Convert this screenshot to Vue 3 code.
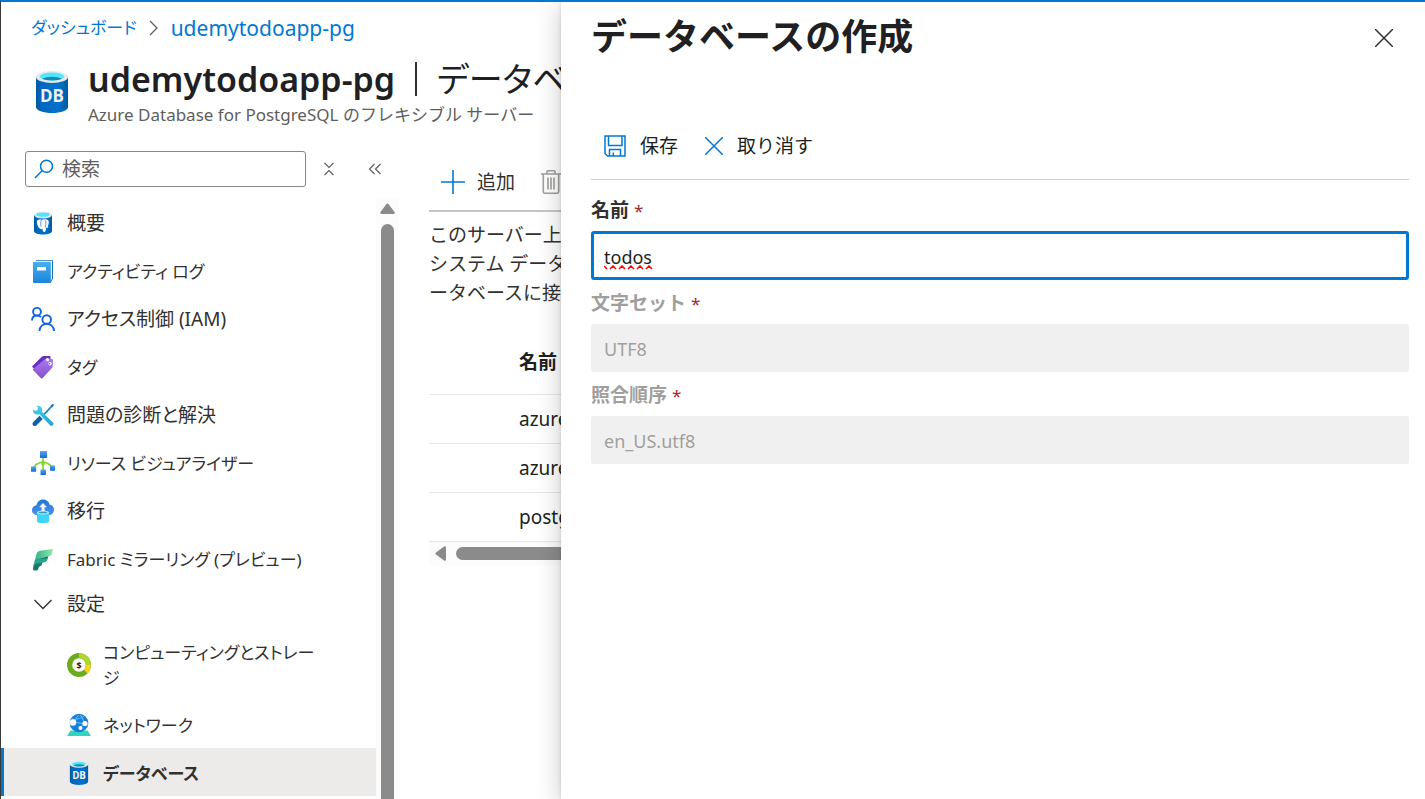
<script setup>
import { ref } from 'vue'

const search = ref('')
const dbName = ref('todos')
const charset = ref('UTF8')
const collation = ref('en_US.utf8')

const items = [
  { icon: 'postgres', label: '概要' },
  { icon: 'log', label: 'アクティビティ ログ', kana: true },
  { icon: 'iam', label: 'アクセス制御 (IAM)' },
  { icon: 'tag', label: 'タグ', kana: true },
  { icon: 'tools', label: '問題の診断と解決' },
  { icon: 'tree', label: 'リソース ビジュアライザー', kana: true },
  { icon: 'migrate', label: '移行' },
  { icon: 'fabric', label: 'Fabric ミラーリング (プレビュー)', kana: true },
]
const subItems = [
  { icon: 'compute', label: 'コンピューティングとストレージ', tall: true },
  { icon: 'network', label: 'ネットワーク' },
  { icon: 'db', label: 'データベース', active: true },
]
const rows = ['azure_maintenance', 'azure_sys', 'postgres']
</script>

<template>
  <div class="shell">
    <svg class="defs" width="0" height="0" aria-hidden="true">
      <defs>
        <linearGradient id="gBody" x1="0" x2="1" y1="0" y2="0">
          <stop offset="0" stop-color="#005ba1" /><stop offset=".2" stop-color="#0068be" />
          <stop offset=".7" stop-color="#0072cc" /><stop offset="1" stop-color="#005ba1" />
        </linearGradient>
        <linearGradient id="gBook" x1="0" x2="0" y1="0" y2="1">
          <stop offset="0" stop-color="#4cadf0" /><stop offset="1" stop-color="#1b84d8" />
        </linearGradient>
        <linearGradient id="gTag" x1="0" x2="0" y1="0" y2="1">
          <stop offset="0" stop-color="#a67af4" /><stop offset="1" stop-color="#8a4fc8" />
        </linearGradient>
        <linearGradient id="gTool" x1="0" x2="0" y1="0" y2="1">
          <stop offset="0" stop-color="#50d0f0" /><stop offset="1" stop-color="#18a0d8" />
        </linearGradient>
        <linearGradient id="gNode" x1="0" x2="0" y1="0" y2="1">
          <stop offset="0" stop-color="#5ea0ef" /><stop offset="1" stop-color="#0f6cd6" />
        </linearGradient>
        <linearGradient id="gCloud" x1="0" x2="0" y1="0" y2="1">
          <stop offset="0" stop-color="#1f74d8" /><stop offset="1" stop-color="#4a94ec" />
        </linearGradient>
        <linearGradient id="gFab" x1="0" x2="1" y1="0" y2="0">
          <stop offset="0" stop-color="#33b08e" /><stop offset="1" stop-color="#8deaa4" />
        </linearGradient>
        <symbol id="i-db" viewBox="0 0 32 42">
          <path fill="url(#gBody)" d="M0 6v30c0 3.400 7.200 6 16 6s16-2.600 16-6V6z" />
          <ellipse cx="16" cy="6" rx="16" ry="6" fill="#e8e8e8" />
          <ellipse cx="16" cy="5.500" rx="12" ry="4" fill="#50e6ff" />
          <path fill="#198ab3" d="M6 7.800c2.400-1.300 6-2 10-2s7.600.7 10 2c-2.400 1.100-6 1.700-10 1.700s-7.600-.6-10-1.700z" />
          <text x="16" y="31" text-anchor="middle" font-family="Open Sans, Noto Sans, sans-serif" font-weight="700" font-size="17" fill="#f2f2f2">DB</text>
        </symbol>
        <symbol id="i-postgres" viewBox="0 0 24 24">
          <path fill="url(#gBody)" d="M3 4v16c0 2 4 3.500 9 3.500s9-1.500 9-3.500V4z" />
          <ellipse cx="12" cy="4" rx="9" ry="3.500" fill="#e8e8e8" />
          <ellipse cx="12" cy="3.600" rx="7" ry="2.200" fill="#50e6ff" />
          <path fill="#fff" d="M6 10c1-1.600 3-1.800 4.500-1.200C12.500 8 16 8 17.400 9.500c1 1.300.3 4-.8 6l1 .6c-.6.8-1.800 1-2.600.7 0 1.900-.3 3.900-1.500 4.100-1.800.3-2-1.400-2-3.100-.7.600-1.700.5-2.300-.1C7.500 17.200 5.300 12.500 6 10z" />
          <path fill="none" stroke="#1c6cba" stroke-width=".7" d="M10.500 9c-1.300 2-.6 4.200-.6 6.500M14 9.200c1.500 1.600.8 4 .4 6.300l.7 1.200" />
        </symbol>
        <symbol id="i-log" viewBox="0 0 24 24">
          <path fill="#1570b8" d="M5 1h16q1 0 1 1v17.500L19.500 24H4z" />
          <path fill="#e8eef4" d="M4 3q0-1.200 1.500-1.200H21v18l-1.500 2.500z" />
          <path fill="url(#gBook)" d="M2 3h17q.8 0 .8.800V23q0 1-.8 1H3q-1 0-1-1z" />
          <rect x="6" y="8" width="9" height="3.500" rx=".4" fill="#fff" />
        </symbol>
        <symbol id="i-iam" viewBox="0 0 24 24">
          <g fill="none" stroke="#1464e0" stroke-width="1.900">
            <circle cx="6" cy="4.800" r="3.900" /><path d="M1 13.500c0-5.500 6-6.500 9-3.300" />
            <circle cx="15.700" cy="12.500" r="4.300" /><path d="M8.500 24c0-9.500 14.500-9.500 14.500 0" />
          </g>
        </symbol>
        <symbol id="i-tag" viewBox="0 0 24 24">
          <path fill="#6a2fc4" d="M1 11.500L10.500 2q1-1 2.500-1h5.500q1 0 1 1v3L6 17z" />
          <path fill="url(#gTag)" d="M2 14L13.500 4.500q1-.8 2.500-.8l5 .3q1 0 1 1l-.3 6q0 1.300-1 2.300l-9 9.700q-1 1-2 0L2 15q-.5-.5 0-1z" />
          <circle cx="16.500" cy="4.700" r="1.600" fill="#fff" /><circle cx="19" cy="8.700" r="1.700" fill="#fff" />
          <circle cx="18.500" cy="8.700" r=".8" fill="#7a45cc" />
        </symbol>
        <symbol id="i-tools" viewBox="0 0 24 24">
          <path stroke="#1978b8" stroke-width="1.800" d="M12 12.500L21 3" />
          <path fill="#1978b8" d="M19.500 2.500L22 .8l1 1-1.700 2.700z" />
          <path fill="#0f62aa" d="M2 19.200l6.500-6.500 3.300 3.300-6.500 6.500c-2.300 1.800-4.800-1-3.300-3.300z" />
          <path fill="url(#gTool)" d="M2.200 6.500l1.700 1.300 2.500-.6.600-2.500L5.500 3C9 1.800 12.300 5 11 8.700l11.300 11.200c.9 1.600-1.300 3.700-2.900 2.700L8.500 11.300C5 12.500 1 9.800 2.200 6.500z" />
        </symbol>
        <symbol id="i-tree" viewBox="0 0 24 24">
          <path fill="none" stroke="#86d633" stroke-width="1.700" d="M12 6v13M12 10.500C7.500 12.500 3 13 3 18M12 10.500c4.500 2 8.500 2.500 9 7" />
          <circle cx="12" cy="12.500" r="2" fill="#86d633" />
          <g fill="url(#gNode)">
            <rect x="9" y="0" width="7" height="7" rx=".6" /><rect x="0" y="15.500" width="5.200" height="5.200" rx=".4" />
            <rect x="9.500" y="18.500" width="5.500" height="5.500" rx=".4" /><rect x="19" y="14.500" width="5" height="5.200" rx=".4" />
          </g>
        </symbol>
        <symbol id="i-migrate" viewBox="0 0 24 24">
          <path fill="url(#gCloud)" d="M6.500 16C2.500 16 1 13.500 1 11c0-2.500 2-4.500 4.500-4.800C6 3 8.500.5 12 .5c3.300 0 6 2 6.800 5.200C21.500 6 23 8.200 23 10.700c0 3-2 5.300-5 5.300z" />
          <path fill="#f4f4f4" d="M12 4l4 4.200h-2.400v4.300h-3V8.200H8z" />
          <path fill="#3fd3f5" d="M6 13.500v9C6 23.500 9 24 12 24s6-.5 6-1.500v-9z" />
          <ellipse cx="12" cy="13.500" rx="6" ry="1.900" fill="#d8f6fd" /><ellipse cx="12" cy="13.500" rx="4.500" ry="1" fill="#3b9cc4" />
        </symbol>
        <symbol id="i-fabric" viewBox="0 0 24 24">
          <path fill="#16786c" d="M2 21.500l1-5.500 9-3-1.500 5.500-2.500 1.200-1 2.800q-.4 1-1.400 1H3.200Q1.800 23.300 2 21.500z" />
          <path fill="#0d6560" d="M3.500 14.500l2-3.200 12-3-1.500 5.200-8 2.500z" />
          <path fill="#2ba58d" d="M4 12.500l12.500-1.500-.7 2.300q-.4 1.500-2 1.900L4.500 17l-2.200 3z" />
          <path fill="url(#gFab)" d="M5.500 7.200Q6 4.200 9 3.700L22 2l-1.300 5q-.5 1.700-2 2.100L4 13z" />
        </symbol>
        <symbol id="i-compute" viewBox="0 0 24 24">
          <g fill="none" stroke-width="5.200">
            <circle cx="12" cy="12" r="9.400" stroke="#6aac1c" />
            <path stroke="#b0d430" d="M12 2.600a9.400 9.400 0 0 1 9.400 9.400" />
            <path stroke="#fcd116" d="M21.400 12a9.400 9.400 0 0 1-2.700 6.600" />
          </g>
          <text x="12" y="15.500" text-anchor="middle" font-family="Open Sans, Noto Sans, sans-serif" font-weight="700" font-size="9" fill="#222">$</text>
        </symbol>
        <symbol id="i-network" viewBox="0 0 24 24">
          <path fill="#32d4c0" d="M3.500 17.500h17l3 4.500q.8 1-.5 1H1q-1.300 0-.5-1z" />
          <circle cx="12" cy="10" r="9.300" fill="#1780dc" />
          <path fill="none" stroke="#6cbcf4" stroke-width="1" d="M7 9L11.500 2M7 9l11 2M13 14.500l5-4M5 6c4 1 9-.5 12-3M13.500 2l4.500 8.500" />
          <circle cx="6" cy="9.500" r="3.200" fill="#fff" /><circle cx="18" cy="10.500" r="2.600" fill="#fff" /><circle cx="13.500" cy="15" r="2" fill="#fff" />
        </symbol>
      </defs>
    </svg>

    <header class="top">
      <nav class="crumbs prop">
        <a class="home" href="#">ダッシュボード</a>
        <svg width="10" height="16" viewBox="0 0 10 16"><path fill="none" stroke="#605e5c" stroke-width="1.300" d="M1 1l7 7-7 7" /></svg>
        <a href="#">udemytodoapp-pg</a>
      </nav>
      <div class="titlebar">
        <svg class="resicon" width="32" height="42"><use href="#i-db" /></svg>
        <div>
          <h1 class="prop"><b>udemytodoapp-pg</b><i class="bar"></i>データベース</h1>
          <p class="subtitle">Azure Database for PostgreSQL のフレキシブル サーバー</p>
        </div>
      </div>
    </header>

    <div class="body">
      <aside class="side prop">
        <div class="searchrow">
          <label class="search">
            <svg width="20" height="20" viewBox="0 0 20 20"><g fill="none" stroke="#0078d4" stroke-width="1.500"><circle cx="12.500" cy="7.200" r="6" /><path d="M8.200 11.600L1 19" /></g></svg>
            <input v-model="search" type="text" placeholder="検索" aria-label="検索" />
          </label>
          <button class="mini" aria-label="すべて折りたたむ">
            <svg width="12" height="14" viewBox="0 0 12 14"><path fill="none" stroke="#605e5c" stroke-width="1.200" d="M1.500 1L6 5.500 10.500 1M1.500 13L6 8.500l4.500 4.500" /></svg>
          </button>
          <button class="mini" aria-label="メニューを閉じる">
            <svg width="14" height="12" viewBox="0 0 14 12"><path fill="none" stroke="#605e5c" stroke-width="1.200" d="M6.500 1l-5 5 5 5M12.500 1l-5 5 5 5" /></svg>
          </button>
        </div>
        <div class="navwrap">
          <nav class="nav">
            <a v-for="i in items" :key="i.label" class="item" :class="{ kana: i.kana }" href="#">
              <svg width="24" height="24"><use :href="'#i-' + i.icon" /></svg><span>{{ i.label }}</span>
            </a>
            <button class="item group" aria-expanded="true">
              <svg width="24" height="24" viewBox="0 0 24 24"><path fill="none" stroke="#323130" stroke-width="1.400" d="M3.500 8l8.500 8.500L20.500 8" /></svg><span>設定</span>
            </button>
            <a v-for="i in subItems" :key="i.label" class="item sub kana" :class="{ tall: i.tall, active: i.active }" href="#">
              <svg width="24" height="24"><use :href="'#i-' + i.icon" /></svg><span>{{ i.label }}</span>
            </a>
          </nav>
          <div class="vscroll">
            <svg width="15" height="11" viewBox="0 0 15 11"><path fill="#8b8b8b" d="M6.500 1q1-1.200 2 0l6 8q.8 2-1 2h-12q-1.800 0-1-2z" /></svg>
            <div class="vthumb"></div>
          </div>
        </div>
      </aside>

      <main class="main">
        <div class="commands">
          <button class="cmd">
            <svg width="24" height="24" viewBox="0 0 24 24"><path stroke="#0078d4" stroke-width="1.600" d="M12 0v24M0 12h24" /></svg>追加
          </button>
          <button class="cmd" disabled aria-label="削除">
            <svg width="20" height="24" viewBox="0 0 20 24"><path fill="none" stroke="#a19f9d" stroke-width="1.600" d="M0 4h20M6 4V1.500q0-.7.700-.7h6.600q.7 0 .7.700V4M2.300 4v17.500q0 1.700 1.500 1.700h12.400q1.500 0 1.500-1.700V4M7 7.500v12M10 7.500v12M13 7.500v12" /></svg>
          </button>
        </div>
        <p class="desc">このサーバー上<br />システム データ<br />ータベースに接</p>
        <table>
          <thead><tr><th>名前</th></tr></thead>
          <tbody><tr v-for="r in rows" :key="r"><td>{{ r }}</td></tr></tbody>
        </table>
        <div class="hscroll">
          <svg width="11" height="15" viewBox="0 0 11 15"><path fill="#8b8b8b" d="M1 6.500q-1.200 1 0 2l8 6q2 .8 2-1v-12q0-1.800-2-1z" /></svg>
          <div class="hthumb"></div>
        </div>
      </main>
    </div>

    <section class="panel" role="dialog" aria-labelledby="paneltitle">
      <div class="panelhead">
        <h2 id="paneltitle">データベースの作成</h2>
        <button class="close" aria-label="閉じる">
          <svg width="18" height="18" viewBox="0 0 18 18"><path stroke="#323130" stroke-width="1.500" d="M0 0l18 18M18 0L0 18" /></svg>
        </button>
      </div>
      <div class="panelcmds">
        <button class="cmd">
          <svg width="22" height="22" viewBox="0 0 22 22"><g fill="none" stroke="#0078d4" stroke-width="1.500"><path d="M1 1h20v20H3.500L1 18.500z" /><path d="M4.500 1v9.500h13.500V1M5.500 21v-6.500h11V21M9.300 21v-3.500" /></g></svg>保存
        </button>
        <button class="cmd">
          <svg width="18" height="18" viewBox="0 0 18 18"><path stroke="#0078d4" stroke-width="1.500" d="M0 0l18 18M18 0L0 18" /></svg>取り消す
        </button>
      </div>
      <form class="form" @submit.prevent>
        <label for="f-name">名前 <span class="req">*</span></label>
        <div class="field">
          <input id="f-name" v-model="dbName" class="focus" type="text" spellcheck="false" />
          <svg class="squiggle" width="50" height="5" viewBox="0 0 50 5"><path fill="none" stroke="#f00" stroke-width="1.500" d="M0 1l3 3M6 4l3-3 3 3M15 4l3-3 3 3M24 4l3-3 3 3M33 4l3-3 3 3M42 4l3-3 3 3" /></svg>
        </div>
        <label for="f-charset" class="off">文字セット <span class="req">*</span></label>
        <input id="f-charset" v-model="charset" type="text" disabled />
        <label for="f-coll" class="off">照合順序 <span class="req">*</span></label>
        <input id="f-coll" v-model="collation" type="text" disabled />
      </form>
    </section>
  </div>
</template>

<style>
body { margin: 0; background: #fff; }
</style>

<style scoped>
* { box-sizing: border-box; }
.shell {
  position: relative; height: 100vh; overflow: hidden; display: flex; flex-direction: column;
  border-top: 2px solid #0078d4; border-left: 1px solid #3b3a39; background: #fff; color: #323130;
  font-family: "Noto Sans", "Noto Sans CJK JP", sans-serif; font-size: 19px; line-height: 28px;
}
.defs { position: absolute; }
.prop { font-feature-settings: "palt"; }
button { border: 0; background: none; padding: 0; margin: 0; color: inherit; font: inherit; font-feature-settings: inherit; }
a { color: inherit; text-decoration: none; }
svg { flex: none; display: block; }

.top { padding: 12px 0 0 30px; white-space: nowrap; }
.crumbs { display: flex; align-items: center; gap: 12px; height: 28px; font-size: 21px; }
.crumbs a { color: #0078d4; }
.crumbs .home { font-size: 17px; }
.titlebar { display: flex; gap: 20px; padding: 15px 0 0 5px; }
.resicon { margin-top: 14px; }
h1 { display: flex; align-items: center; margin: 0; font-size: 34px; line-height: 44px; font-weight: 400; color: #201f24; }
h1 b { font-weight: 600; }
.bar { width: 2px; height: 34px; margin: 0 20px; background: #323130; }
.subtitle { margin: 0; font-size: 17px; line-height: 28px; color: #605e5c; }

.body { flex: 1; min-height: 0; display: flex; }
.side { width: 398px; flex: none; display: flex; flex-direction: column; padding-top: 22px; }
.searchrow { display: flex; align-items: center; padding-left: 24px; height: 36px; }
.search { display: flex; align-items: center; gap: 8px; width: 281px; height: 36px; padding: 0 8px; border: 1px solid #8a8886; border-radius: 3px; }
.search input { flex: 1; min-width: 0; border: 0; outline: 0; padding: 0; background: none; font: inherit; color: inherit; }
.search input::placeholder { color: #605e5c; opacity: 1; }
.mini { display: flex; justify-content: center; width: 46px; }
.navwrap { flex: 1; min-height: 0; display: flex; padding-top: 11px; }
.nav { flex: 1; min-width: 0; overflow: hidden; }
.item { display: flex; align-items: center; gap: 12px; width: 100%; height: 48px; padding: 2px 0 0 30px; line-height: 25px; text-align: left; }
.kana { font-size: 17px; }
.group { height: 46px; padding: 0 0 2px 30px; }
.sub { padding-left: 66px; padding-right: 55px; }
.tall { height: 72px; }
.active { background: #edebe9; border-left: 3px solid #0078d4; padding-left: 63px; font-weight: 600; }
.vscroll { width: 23px; display: flex; flex-direction: column; align-items: center; gap: 10px; padding-top: 5px; background: #fcfcfc; }
.vthumb { flex: 1; width: 13px; border-radius: 7px 7px 0 0; background: #8b8b8b; }

.main { flex: 1; min-width: 0; padding: 25px 0 0 30px; }
.commands { display: flex; align-items: center; gap: 26px; height: 58px; padding: 0 12px 0 12px; border-bottom: 2px solid #c8c6c4; }
.cmd { display: flex; align-items: center; gap: 12px; }
.desc { margin: 0; padding-top: 9px; line-height: 29px; white-space: nowrap; }
table { width: 100%; margin-top: 21px; border-collapse: separate; border-spacing: 0; }
th, td { height: 49px; padding: 0 0 0 90px; text-align: left; border-bottom: 1px solid #e6e6e6; color: #201f1e; }
th { height: 66px; font-weight: 600; }
.hscroll { display: flex; align-items: center; gap: 10px; height: 23px; padding-left: 6px; background: #fcfcfc; }
.hthumb { flex: 1; height: 13px; border-radius: 7px; background: #8b8b8b; }

.panel { position: absolute; top: 0; bottom: 0; left: 560px; right: 0; padding: 0 16px 0 30px; background: #fff; box-shadow: 0 0 3px rgba(0, 0, 0, .15), 0 4px 24px rgba(0, 0, 0, .22); }
.panelhead { display: flex; justify-content: space-between; height: 112px; }
h2 { margin: 0; padding-top: 9px; font-size: 36px; line-height: 52px; font-weight: 700; color: #201f24; }
.close { height: 18px; margin: 27px 16px 0 0; }
.panelcmds { display: flex; gap: 27px; height: 66px; padding: 0 0 2px 13px; border-bottom: 1px solid #d2d0ce; color: #201f1e; }
.panelcmds .cmd { gap: 14px; }
.form { display: flex; flex-direction: column; padding-top: 7px; }
.form label { height: 44px; padding-top: 9px; font-weight: 600; }
.form label.off { color: #a19f9d; }
.form .req { font-size: 17px; font-weight: 400; color: #a4262c; }
.form input { width: 100%; height: 48px; padding: 2px 13px 0; border: 0; border-radius: 3px; outline: 0; background: #f1f0f0; color: #a19f9d; font: inherit; font-size: 18px; }
.field { position: relative; height: 49px; }
.form .focus { height: 49px; padding: 2px 10px 0; border: 3px solid #0078d4; background: #fff; color: #201f1e; }
.squiggle { position: absolute; left: 13px; bottom: 10px; }
</style>
